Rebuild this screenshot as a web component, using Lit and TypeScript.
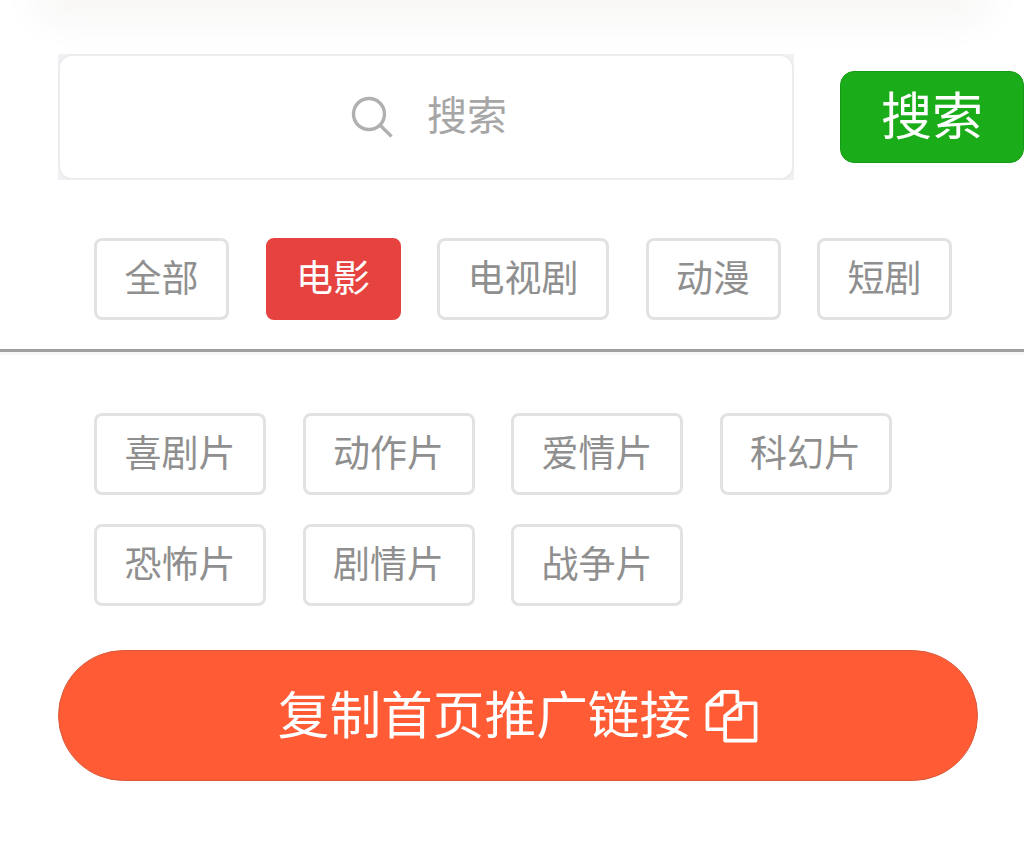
import { LitElement, html, css } from 'lit';
import { customElement } from 'lit/decorators.js';

const MAIN_TAGS = ['全部', '电影', '电视剧', '动漫', '短剧'];
const SUB_TAGS = ['喜剧片', '动作片', '爱情片', '科幻片', '恐怖片', '剧情片', '战争片'];

@customElement('app-root')
export class AppRoot extends LitElement {
    static styles = css`
    :host {
      display: block;
      width: 1024px;
      height: 846px;
      overflow: hidden;
      background: #fff;
      font-family: "Noto Sans CJK SC", "Liberation Sans", sans-serif;
    }
    .shade {
      height: 1px;
      margin: -1px 48px 0;
      box-shadow: 0 0 44px 10px rgba(70, 40, 20, 0.09);
    }
    .search-row {
      display: flex;
      align-items: center;
      padding: 54px 0 0 58px;
    }
    .search-back {
      width: 736px;
      height: 126px;
      background: #f1f1f5;
    }
    .search-box {
      box-sizing: border-box;
      height: 100%;
      display: flex;
      align-items: center;
      justify-content: center;
      gap: 34px;
      padding-left: 6px;
      background: #fff;
      border: 2px solid #ececec;
      border-radius: 14px;
      color: #a6a6a6;
      font-size: 40px;
      line-height: 1;
    }
    .search-box span {
      margin-bottom: 8px;
    }
    .search-box svg {
      width: 42px;
      height: 42px;
    }
    .search-btn {
      box-sizing: border-box;
      width: 184px;
      height: 92px;
      margin-left: 46px;
      padding-bottom: 8px;
      display: flex;
      align-items: center;
      justify-content: center;
      background: #1aad19;
      border: 1px solid #179b16;
      border-radius: 14px;
      color: #fff;
      font-size: 51px;
      line-height: 1;
    }
    .tags {
      display: flex;
      flex-wrap: wrap;
      padding-left: 94px;
      column-gap: 36.5px;
    }
    .main-tags {
      margin-top: 58px;
    }
    .sub-tags {
      row-gap: 29px;
      width: 830px;
      margin-top: 58px;
    }
    .tag {
      box-sizing: border-box;
      height: 82px;
      padding: 0 27.5px 6px;
      display: flex;
      align-items: center;
      border: 3px solid #e2e2e2;
      border-radius: 8px;
      color: #8f8f8f;
      font-size: 37px;
      line-height: 1;
      white-space: nowrap;
    }
    .tag.active {
      background: #e64340;
      border-color: #e64340;
      color: #fff;
    }
    .divider {
      height: 3px;
      margin-top: 29px;
      background: #a0a0a0;
      border-bottom: 3px solid #f7f7f7;
    }
    .copy-btn {
      box-sizing: border-box;
      width: 920px;
      height: 131px;
      margin: 44px 0 0 58px;
      display: flex;
      align-items: center;
      justify-content: center;
      gap: 14px;
      background: #ff5c35;
      border: 1px solid #d9583a;
      border-radius: 66px;
      color: #fff;
      font-size: 51.7px;
      line-height: 1;
    }
    .copy-btn span {
      margin-bottom: 8px;
    }
    .copy-btn svg {
      width: 53px;
      height: 54px;
    }
  `;

    render() {
        return html`
      <div class="shade"></div>
      <div class="search-row">
        <div class="search-back">
          <div class="search-box">
            <svg viewBox="0 0 42 42" fill="none" stroke="#b0b0b0" stroke-width="3.4">
              <circle cx="18" cy="18" r="15.5"></circle>
              <path d="M29 29 L40.5 40.5"></path>
            </svg>
            <span>搜索</span>
          </div>
        </div>
        <div class="search-btn">搜索</div>
      </div>
      <div class="tags main-tags">
        ${MAIN_TAGS.map((t) => html`<div class="tag ${t === '电影' ? 'active' : ''}">${t}</div>`)}
      </div>
      <div class="divider"></div>
      <div class="tags sub-tags">
        ${SUB_TAGS.map((t) => html`<div class="tag">${t}</div>`)}
      </div>
      <div class="copy-btn">
        <span>复制首页推广链接</span>
        <svg viewBox="0 0 54 54" fill="none" stroke="#fff" stroke-width="3.8" stroke-linejoin="round">
          <path d="M33 14 V2.5 H17 L2.5 15.5 V40.5 H20"></path>
          <path d="M17 2.5 V15.5 H2.5"></path>
          <path d="M51.5 14 H36 L20.5 27 V52 H51.5 Z"></path>
          <path d="M36 14 V30 H20.5"></path>
        </svg>
      </div>
    `;
    }
}
